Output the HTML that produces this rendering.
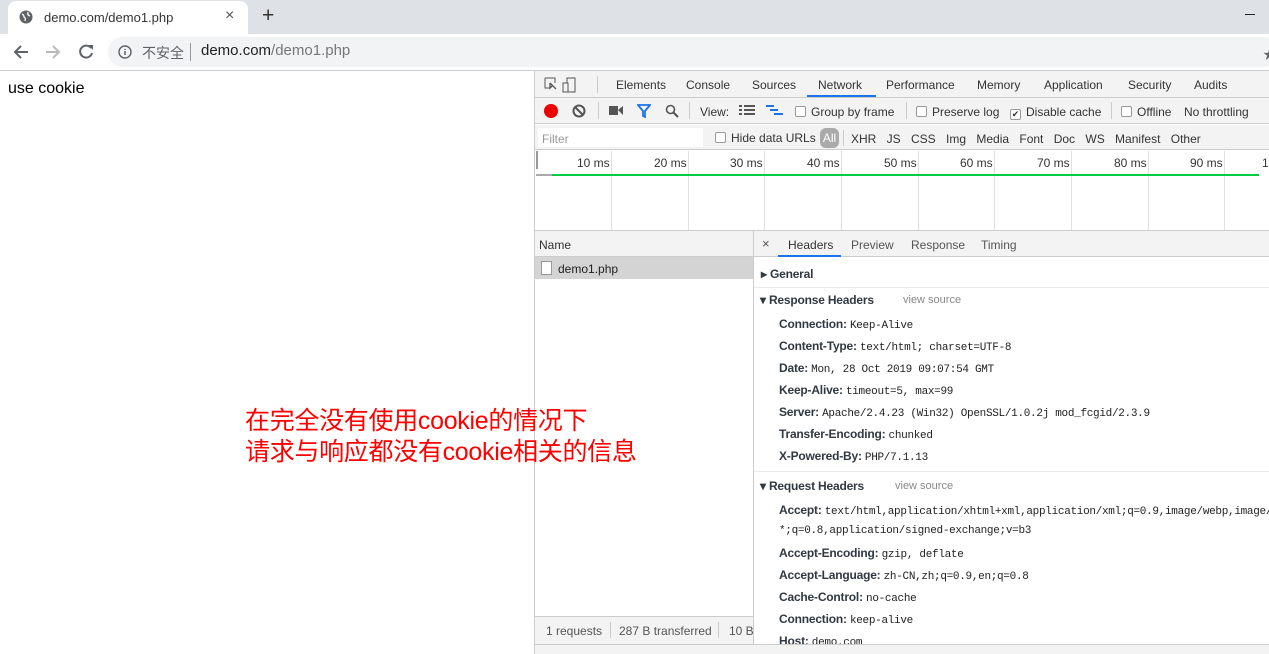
<!DOCTYPE html>
<html><head><meta charset="utf-8"><style>
*{margin:0;padding:0;box-sizing:border-box}
body{width:1269px;height:654px;overflow:hidden;background:#fff;font-family:"Liberation Sans","Noto Sans CJK SC",sans-serif;position:relative;color:#333}
.a{position:absolute;white-space:nowrap}
.dt{font-size:12px;color:#333}
.lab{font-size:12px;font-weight:bold;color:#303942;letter-spacing:-0.2px}
.val{font-family:"Liberation Mono",monospace;font-size:11px;color:#222;font-weight:normal;letter-spacing:-0.3px}
.cb{display:inline-block;width:11px;height:11px;border:1px solid #999;border-radius:2px;background:#fff;vertical-align:-1px;margin-right:5px}
.vl{position:absolute;width:1px;background:#e0e0e0}
</style></head><body>
<div class="a" style="left:0;top:0;width:1269px;height:34px;background:#dee1e6"></div>
<div class="a" style="left:8px;top:1px;width:240px;height:34px;background:#fff;border-radius:8px 8px 0 0"></div>
<svg class="a" style="left:19px;top:10px" width="14" height="14" viewBox="0 0 14 14"><circle cx="7" cy="7" r="6.5" fill="#5f6368"/><path d="M3 4 Q5 5 5 7 Q7 8 6 11 M9 2 Q8 5 11 6" stroke="#fff" stroke-width="1.3" fill="none"/></svg>
<div class="a" style="left:44px;top:10px;font-size:13px;color:#333">demo.com/demo1.php</div>
<div class="a" style="left:225px;top:7px;font-size:16px;color:#555">×</div>
<div class="a" style="left:262px;top:4px;font-size:21px;color:#333">+</div>
<div class="a" style="left:1245px;top:14px;width:10px;height:1px;background:#222"></div>
<svg class="a" style="left:12px;top:44px" width="18" height="16" viewBox="0 0 18 16"><path d="M16 8H3M9 2L3 8l6 6" stroke="#5f6368" stroke-width="2" fill="none"/></svg>
<svg class="a" style="left:44px;top:44px" width="18" height="16" viewBox="0 0 18 16"><path d="M2 8h13M9 2l6 6-6 6" stroke="#bbb" stroke-width="2" fill="none"/></svg>
<svg class="a" style="left:78px;top:43px" width="17" height="17" viewBox="0 0 17 17"><path d="M13 5A6 6 0 1 0 14 10" stroke="#5f6368" stroke-width="2" fill="none"/><path d="M10 2h5v5z" fill="#5f6368"/></svg>
<div class="a" style="left:108px;top:37px;width:1170px;height:30px;background:#f1f3f4;border-radius:15px"></div>
<svg class="a" style="left:118px;top:45px" width="14" height="14" viewBox="0 0 14 14"><circle cx="7" cy="7" r="6" stroke="#5f6368" stroke-width="1.4" fill="none"/><path d="M7 6v4M7 4v1" stroke="#5f6368" stroke-width="1.5"/></svg>
<div class="a" style="left:142px;top:43px;font-size:14px;color:#5f6368">不安全</div>
<div class="a" style="left:190px;top:43px;width:1px;height:18px;background:#999"></div>
<div class="a" style="left:201px;top:42px;font-size:15px;color:#222">demo.com<span style="color:#777">/demo1.php</span></div>
<div class="a" style="left:1263px;top:44px;font-size:13px;color:#666">★</div>
<div class="a" style="left:0;top:70px;width:1269px;height:1px;background:#ccc"></div>
<div class="a" style="left:8px;top:80px;font-size:16px;color:#000">use cookie</div>
<div class="a" style="left:534px;top:71px;width:735px;height:583px;background:#fff;border-left:1px solid #ccc"></div>
<div class="a" style="left:535px;top:71px;width:734px;height:27px;background:#f3f3f3;border-bottom:1px solid #ccc"></div>
<svg class="a" style="left:544px;top:77px" width="32" height="16" viewBox="0 0 32 16"><path d="M1 1h10v5M1 1v10h5" stroke="#555" fill="none"/><path d="M6 6l6 6M6 6v5l2-2" stroke="#555" stroke-width="1.3" fill="none"/><rect x="23" y="1" width="8" height="14" stroke="#555" fill="none"/><rect x="19" y="6" width="5" height="9" stroke="#555" fill="#f3f3f3"/></svg>
<div class="a" style="left:597px;top:76px;width:1px;height:17px;background:#ccc"></div>
<div class="a dt" style="left:616px;top:78px">Elements</div>
<div class="a dt" style="left:686px;top:78px">Console</div>
<div class="a dt" style="left:752px;top:78px">Sources</div>
<div class="a dt" style="left:818px;top:78px">Network</div>
<div class="a" style="left:807px;top:95px;width:69px;height:2px;background:#1a73e8"></div>
<div class="a dt" style="left:886px;top:78px">Performance</div>
<div class="a dt" style="left:977px;top:78px">Memory</div>
<div class="a dt" style="left:1044px;top:78px">Application</div>
<div class="a dt" style="left:1128px;top:78px">Security</div>
<div class="a dt" style="left:1194px;top:78px">Audits</div>
<div class="a" style="left:535px;top:98px;width:734px;height:26px;background:#f3f3f3;border-bottom:1px solid #ccc"></div>
<div class="a" style="left:544px;top:104px;width:14px;height:14px;border-radius:50%;background:#e00"></div>
<svg class="a" style="left:572px;top:104px" width="14" height="14" viewBox="0 0 14 14"><circle cx="7" cy="7" r="5.5" stroke="#555" stroke-width="2" fill="none"/><path d="M3 3l8 8" stroke="#555" stroke-width="2"/></svg>
<div class="a" style="left:598px;top:102px;width:1px;height:17px;background:#ccc"></div>
<svg class="a" style="left:609px;top:105px" width="14" height="11" viewBox="0 0 14 11"><rect x="0" y="1" width="9" height="9" fill="#555"/><path d="M9 5l5-4v9z" fill="#555"/></svg>
<svg class="a" style="left:637px;top:104px" width="14" height="14" viewBox="0 0 14 14"><path d="M1 1h12L8 7v6l-2-1V7z" stroke="#1a73e8" stroke-width="1.8" fill="none"/></svg>
<svg class="a" style="left:665px;top:104px" width="14" height="14" viewBox="0 0 14 14"><circle cx="5.5" cy="5.5" r="4" stroke="#555" stroke-width="1.6" fill="none"/><path d="M8.5 8.5l4.5 4.5" stroke="#555" stroke-width="2"/></svg>
<div class="a" style="left:689px;top:102px;width:1px;height:17px;background:#ccc"></div>
<div class="a dt" style="left:700px;top:105px">View:</div>
<svg class="a" style="left:739px;top:105px" width="16" height="12" viewBox="0 0 16 12"><path d="M0 1h3M5 1h11M0 5h3M5 5h11M0 9h3M5 9h11" stroke="#555" stroke-width="2"/></svg>
<svg class="a" style="left:766px;top:105px" width="18" height="12" viewBox="0 0 18 12"><path d="M0 1h8M4 5h8M8 9h9" stroke="#1a73e8" stroke-width="2"/></svg>
<div class="a dt" style="left:795px;top:105px"><span class="cb"></span>Group by frame</div>
<div class="a" style="left:906px;top:102px;width:1px;height:17px;background:#ccc"></div>
<div class="a dt" style="left:916px;top:105px"><span class="cb"></span>Preserve log</div>
<div class="a dt" style="left:1010px;top:105px"><span class="cb" style="text-align:center;font-size:9px;line-height:9px">✔</span>Disable cache</div>
<div class="a" style="left:1111px;top:102px;width:1px;height:17px;background:#ccc"></div>
<div class="a dt" style="left:1121px;top:105px"><span class="cb"></span>Offline</div>
<div class="a dt" style="left:1184px;top:105px">No throttling</div>
<div class="a" style="left:535px;top:125px;width:734px;height:25px;background:#f3f3f3;border-bottom:1px solid #ccc"></div>
<div class="a" style="left:538px;top:128px;width:165px;height:19px;background:#fff"></div>
<div class="a dt" style="left:542px;top:132px;color:#999">Filter</div>
<div class="a dt" style="left:715px;top:131px"><span class="cb"></span>Hide data URLs</div>
<div class="a" style="left:820px;top:128px;width:19px;height:20px;background:#aaa;border-radius:6px;color:#fff;font-size:12px;text-align:center;line-height:20px">All</div>
<div class="a" style="left:843px;top:130px;width:1px;height:16px;background:#ccc"></div>
<div class="a dt" style="left:851px;top:132px;word-spacing:7px">XHR JS CSS Img Media Font Doc WS Manifest Other</div>
<div class="a" style="left:536px;top:151px;width:2px;height:18px;background:#999"></div>
<div class="vl" style="left:611px;top:151px;height:80px"></div>
<div class="vl" style="left:688px;top:151px;height:80px"></div>
<div class="vl" style="left:764px;top:151px;height:80px"></div>
<div class="vl" style="left:841px;top:151px;height:80px"></div>
<div class="vl" style="left:918px;top:151px;height:80px"></div>
<div class="vl" style="left:994px;top:151px;height:80px"></div>
<div class="vl" style="left:1071px;top:151px;height:80px"></div>
<div class="vl" style="left:1148px;top:151px;height:80px"></div>
<div class="vl" style="left:1224px;top:151px;height:80px"></div>
<div class="a dt" style="left:577px;top:156px">10 ms</div>
<div class="a dt" style="left:654px;top:156px">20 ms</div>
<div class="a dt" style="left:730px;top:156px">30 ms</div>
<div class="a dt" style="left:807px;top:156px">40 ms</div>
<div class="a dt" style="left:884px;top:156px">50 ms</div>
<div class="a dt" style="left:960px;top:156px">60 ms</div>
<div class="a dt" style="left:1037px;top:156px">70 ms</div>
<div class="a dt" style="left:1114px;top:156px">80 ms</div>
<div class="a dt" style="left:1190px;top:156px">90 ms</div>
<div class="a dt" style="left:1262px;top:156px">10</div>
<div class="a" style="left:536px;top:174px;width:16px;height:2px;background:#aaa"></div>
<div class="a" style="left:552px;top:174px;width:707px;height:2px;background:#0c4"></div>
<div class="a" style="left:535px;top:230px;width:734px;height:1px;background:#ccc"></div>
<div class="a" style="left:535px;top:231px;width:218px;height:26px;background:#f3f3f3;border-bottom:1px solid #ccc"></div>
<div class="a dt" style="left:539px;top:238px">Name</div>
<div class="a" style="left:753px;top:231px;width:1px;height:423px;background:#ccc"></div>
<div class="a" style="left:535px;top:257px;width:218px;height:22px;background:#d4d4d4"></div>
<div class="a" style="left:541px;top:261px;width:11px;height:14px;border:1px solid #999;background:#fff"></div>
<div class="a" style="left:558px;top:262px;font-size:12px;color:#222">demo1.php</div>
<div class="a" style="left:535px;top:616px;width:218px;height:28px;background:#f3f3f3;border-top:1px solid #ccc"></div>
<div class="a dt" style="left:546px;top:624px;color:#555">1 requests</div>
<div class="a" style="left:610px;top:622px;width:1px;height:16px;background:#ccc"></div>
<div class="a dt" style="left:619px;top:624px;color:#555">287 B transferred</div>
<div class="a" style="left:718px;top:622px;width:1px;height:16px;background:#ccc"></div>
<div class="a dt" style="left:729px;top:624px;color:#555">10 B</div>
<div class="a" style="left:535px;top:644px;width:734px;height:10px;background:#f3f3f3;border-top:1px solid #ccc"></div>
<div class="a" style="left:754px;top:231px;width:515px;height:26px;background:#f3f3f3;border-bottom:1px solid #ccc"></div>
<div class="a" style="left:762px;top:236px;font-size:13px;color:#555">×</div>
<div class="a dt" style="left:788px;top:238px">Headers</div>
<div class="a" style="left:778px;top:255px;width:63px;height:2px;background:#1a73e8"></div>
<div class="a dt" style="left:851px;top:238px;color:#555">Preview</div>
<div class="a dt" style="left:911px;top:238px;color:#555">Response</div>
<div class="a dt" style="left:981px;top:238px;color:#555">Timing</div>
<div class="a lab" style="left:761px;top:267px">▸ General</div>
<div class="a" style="left:754px;top:287px;width:515px;height:1px;background:#e8e8e8"></div>
<div class="a lab" style="left:760px;top:293px">▾ Response Headers</div>
<div class="a dt" style="left:903px;top:294px;color:#888;font-size:11px">view source</div>
<div class="a lab" style="left:779px;top:317px">Connection: <span class="val">Keep-Alive</span></div>
<div class="a lab" style="left:779px;top:339px">Content-Type: <span class="val">text/html; charset=UTF-8</span></div>
<div class="a lab" style="left:779px;top:361px">Date: <span class="val">Mon, 28 Oct 2019 09:07:54 GMT</span></div>
<div class="a lab" style="left:779px;top:383px">Keep-Alive: <span class="val">timeout=5, max=99</span></div>
<div class="a lab" style="left:779px;top:405px">Server: <span class="val">Apache/2.4.23 (Win32) OpenSSL/1.0.2j mod_fcgid/2.3.9</span></div>
<div class="a lab" style="left:779px;top:427px">Transfer-Encoding: <span class="val">chunked</span></div>
<div class="a lab" style="left:779px;top:449px">X-Powered-By: <span class="val">PHP/7.1.13</span></div>
<div class="a" style="left:754px;top:471px;width:515px;height:1px;background:#e8e8e8"></div>
<div class="a lab" style="left:760px;top:479px">▾ Request Headers</div>
<div class="a dt" style="left:895px;top:480px;color:#888;font-size:11px">view source</div>
<div class="a lab" style="left:779px;top:503px">Accept: <span class="val">text/html,application/xhtml+xml,application/xml;q=0.9,image/webp,image/apng</span></div>
<div class="a val" style="left:779px;top:525px">*;q=0.8,application/signed-exchange;v=b3</div>
<div class="a lab" style="left:779px;top:546px">Accept-Encoding: <span class="val">gzip, deflate</span></div>
<div class="a lab" style="left:779px;top:568px">Accept-Language: <span class="val">zh-CN,zh;q=0.9,en;q=0.8</span></div>
<div class="a lab" style="left:779px;top:590px">Cache-Control: <span class="val">no-cache</span></div>
<div class="a lab" style="left:779px;top:612px">Connection: <span class="val">keep-alive</span></div>
<div class="a lab" style="left:779px;top:634px">Host: <span class="val">demo.com</span></div>
<div class="a" style="left:754px;top:644px;width:515px;height:10px;background:#f3f3f3;border-top:1px solid #ccc"></div>
<div class="a" style="left:245px;top:406px;font-size:25px;line-height:31px;color:#f00;font-family:'Liberation Sans','Noto Sans CJK SC',sans-serif;letter-spacing:-0.3px">在完全没有使用cookie的情况下<br>请求与响应都没有cookie相关的信息</div>
</body></html>
